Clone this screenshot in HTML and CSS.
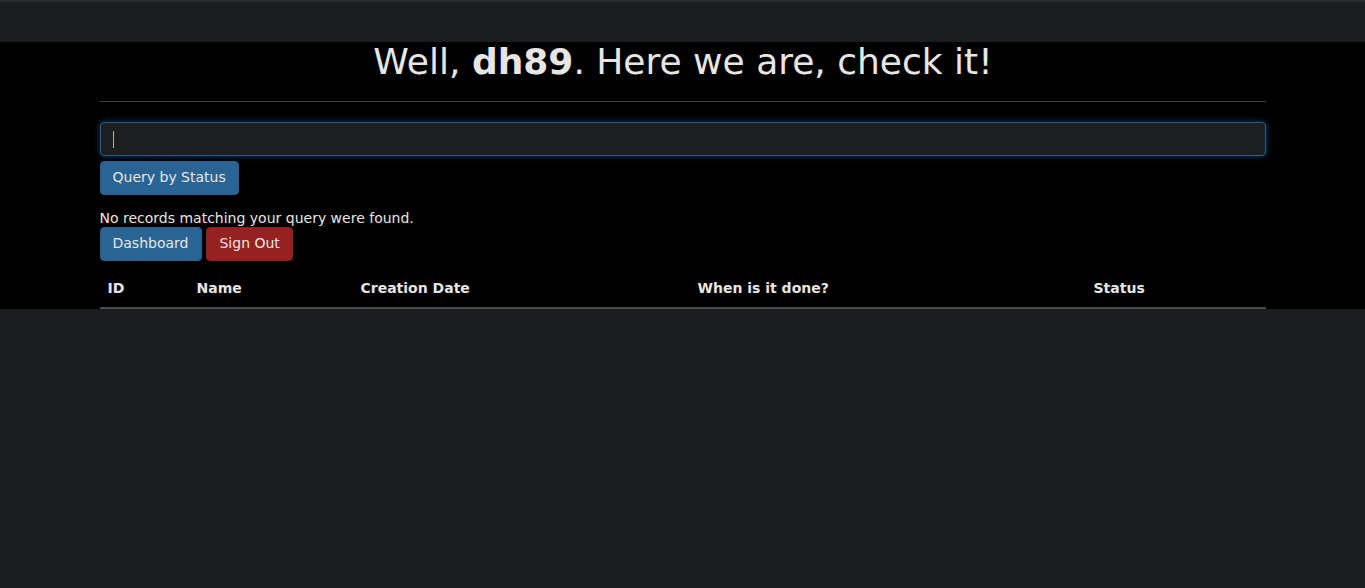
FILE: index.html
```html
<!DOCTYPE html>
<html lang="en">
<head>
<meta charset="utf-8">
<title>Query</title>
<link rel="stylesheet" href="styles.css">
</head>
<body>
<nav class="navbar"></nav>
<main class="main">
  <div class="container">
    <h1 class="title">Well, <b>dh89</b>. Here we are, check it!</h1>
    <hr class="rule">
    <div class="field"><span class="caret"></span></div>
    <button class="btn btn-primary">Query by Status</button>
    <p class="msg">No records matching your query were found.</p>
    <div class="actions">
      <button class="btn btn-primary btn-dash">Dashboard</button>
      <button class="btn btn-danger">Sign Out</button>
    </div>
    <table class="table">
      <thead>
        <tr>
          <th class="c-id">ID</th>
          <th class="c-name">Name</th>
          <th class="c-date">Creation Date</th>
          <th class="c-done">When is it done?</th>
          <th class="c-status">Status</th>
        </tr>
      </thead>
    </table>
  </div>
</main>
</body>
</html>
```
FILE: styles.css
```css
html, body {
  margin: 0;
  padding: 0;
  background: #1b1c1e;
  color: #e8e6e3;
  font-family: "DejaVu Sans", sans-serif;
  font-size: 14px;
  line-height: 20px;
}
.navbar {
  height: 40px;
  border-top: 2px solid #2b2d31;
  background: #1b1c1e;
}
.main {
  background: #000;
}
.container {
  width: 1166px;
  margin: 0 auto;
}
.title {
  margin: 0;
  padding-left: 1px;
  font-size: 36px;
  line-height: 40px;
  font-weight: normal;
  text-align: center;
  color: #e8e6e3;
}
.title b {
  font-weight: bold;
}
.rule {
  margin: 19px 0 20px;
  border: 0;
  border-top: 1px solid #3b3e41;
  height: 0;
}
.field {
  box-sizing: border-box;
  height: 34px;
  border: 1px solid #1f5f8f;
  border-radius: 4px;
  background: #1c1e1f;
  box-shadow: 0 0 6px rgba(30, 110, 180, 0.6);
  padding: 7px 12px;
}
.caret {
  display: block;
  width: 1px;
  height: 17px;
  margin-top: 1px;
  background: #b0b0b0;
}
.btn {
  display: inline-block;
  box-sizing: border-box;
  height: 34px;
  padding: 5px 12px 7px;
  margin: 5px 0 0;
  border: 1px solid transparent;
  border-radius: 4px;
  font-family: "DejaVu Sans", sans-serif;
  font-size: 14px;
  line-height: 20px;
  color: #e8e6e3;
  cursor: pointer;
}
.btn-primary {
  background: #2a6495;
  border-color: #2a5f8c;
}
.btn-danger {
  background: #962121;
  border-color: #8a1f1f;
}
.msg {
  margin: 13px 0 0;
}
.actions {
  display: flex;
  gap: 4px;
  margin-top: -1px;
}
.actions .btn {
  margin: 0;
}
.actions .btn-dash {
  padding-right: 13px;
}
.table {
  width: 100%;
  margin-top: 10px;
  border-collapse: collapse;
  table-layout: fixed;
}
.table th {
  box-sizing: border-box;
  text-align: left;
  padding: 7px 8px 9px;
  font-weight: bold;
  line-height: 20px;
  border-bottom: 2px solid #4a4d50;
}
.c-id { width: 89px; }
.c-name { width: 164px; }
.c-date { width: 337px; }
.c-done { width: 396px; }
.c-status { width: 180px; }
```
